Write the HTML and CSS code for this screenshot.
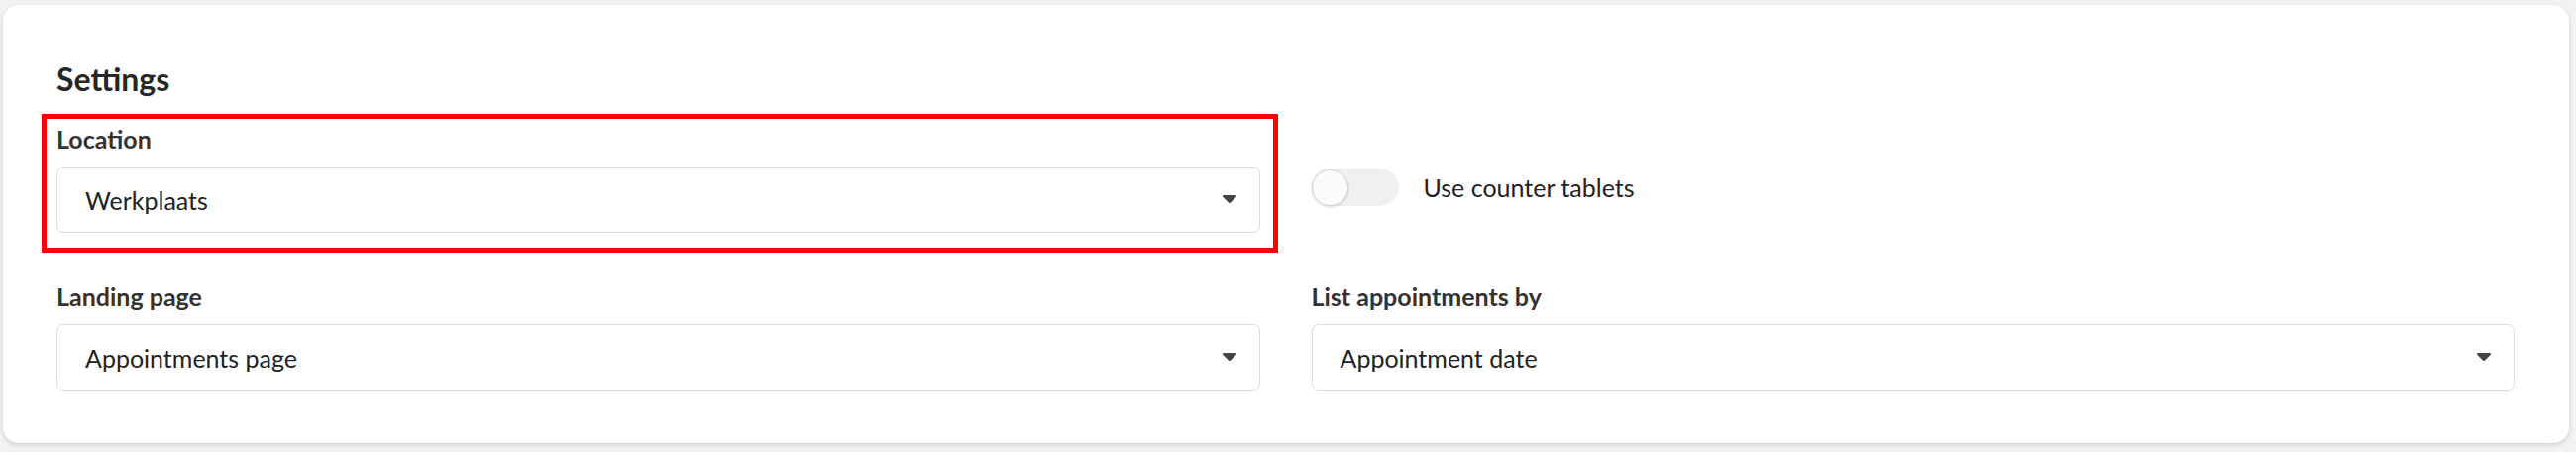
FILE: index.html
```html
<!DOCTYPE html>
<html lang="en">
<head>
<meta charset="UTF-8">
<title>Settings</title>
<link rel="stylesheet" href="styles.css">
</head>
<body>
	<div class="card">
		<h2 class="card-title">Settings</h2>
		<div class="grid">
			<div class="field marked">
				<label class="label">Location</label>
				<div class="select">
					<span>Werkplaats</span>
					<svg class="caret" width="14" height="9" viewBox="0 0 14 9"><path d="M1.2 0h11.6c1 0 1.5 1.2.8 1.9L7.8 7.7c-.4.4-1.2.4-1.6 0L.4 1.9C-.3 1.2.2 0 1.2 0z" fill="#444"/></svg>
				</div>
			</div>
			<div class="field toggle-field">
				<div class="toggle"><span class="knob"></span></div>
				<span class="toggle-text">Use counter tablets</span>
			</div>
			<div class="field">
				<label class="label">Landing page</label>
				<div class="select">
					<span>Appointments page</span>
					<svg class="caret" width="14" height="9" viewBox="0 0 14 9"><path d="M1.2 0h11.6c1 0 1.5 1.2.8 1.9L7.8 7.7c-.4.4-1.2.4-1.6 0L.4 1.9C-.3 1.2.2 0 1.2 0z" fill="#444"/></svg>
				</div>
			</div>
			<div class="field">
				<label class="label">List appointments by</label>
				<div class="select">
					<span>Appointment date</span>
					<svg class="caret" width="14" height="9" viewBox="0 0 14 9"><path d="M1.2 0h11.6c1 0 1.5 1.2.8 1.9L7.8 7.7c-.4.4-1.2.4-1.6 0L.4 1.9C-.3 1.2.2 0 1.2 0z" fill="#444"/></svg>
				</div>
			</div>
		</div>
	</div>
</body>
</html>
```

FILE: styles.css
```css
*{margin: 0; padding: 0; box-sizing: border-box;}
body{
	background: #f2f2f2;
	font-family: Lato, "Open Sans", sans-serif;
	color: #222;
	padding: 5px 7px 8px 3px;
}
.card{
	background: #fff;
	border-radius: 16px;
	box-shadow: 0 2px 5px rgba(0,0,0,.14);
	padding: 57px 55px 53px 54px;
}
.card-title{
	font-size: 32px;
	font-weight: 700;
	line-height: 36px;
	color: #262626;
	margin-bottom: 29px;
}
.grid{
	display: grid;
	grid-template-columns: 1fr 1fr;
	column-gap: 52px;
	row-gap: 51px;
}
.field{position: relative;}
/* red marker round the location field */
.marked::after{
	content: "";
	position: absolute;
	top: -12px; left: -15px; right: -18px; bottom: -20px;
	border: 5px solid #ff0000;
}
.label{
	display: block;
	font-size: 25px;
	font-weight: 700;
	line-height: 26px;
	color: #333;
	margin-bottom: 15px;
}
.select{
	height: 67px;
	border: 1px solid #dcdcdc;
	border-radius: 7px;
	display: flex;
	align-items: center;
	justify-content: space-between;
	padding: 0 23px 0 28px;
	font-size: 25px;
	color: #222;
}
.caret{display: block;}
.toggle-field{
	display: flex;
	align-items: center;
	padding-top: 16px;
}
.toggle{
	width: 88px;
	height: 38px;
	border-radius: 19px;
	background: #f0f0f0;
	display: flex;
	align-items: center;
}
.knob{
	width: 37px;
	height: 37px;
	border-radius: 50%;
	background: #fbfbfb;
	border: 1px solid #d5d5d5;
	box-shadow: 0 1px 3px rgba(0,0,0,.15);
}
.toggle-text{
	margin-left: 25px;
	font-size: 25px;
}
```
